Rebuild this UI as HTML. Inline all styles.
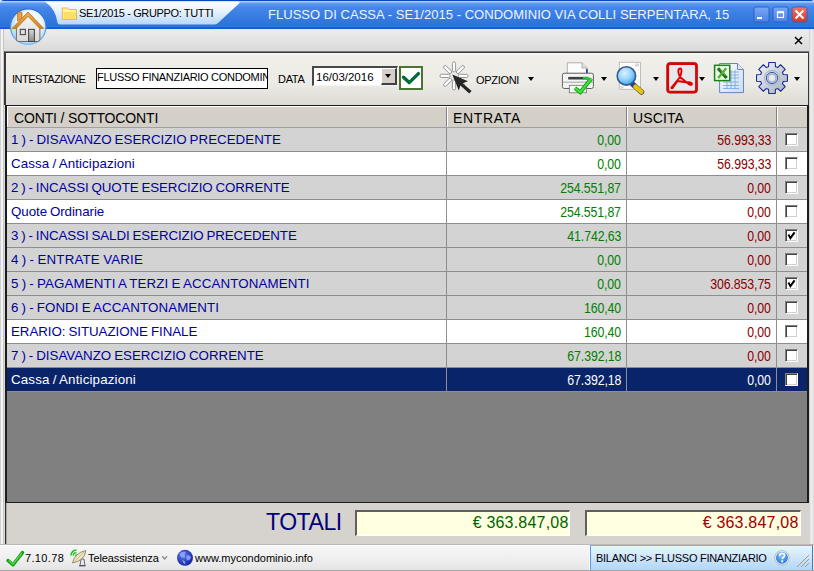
<!DOCTYPE html>
<html><head><meta charset="utf-8">
<style>
*{box-sizing:border-box;margin:0;padding:0}
html,body{width:814px;height:571px;overflow:hidden;background:#eeeeee;font-family:"Liberation Sans",sans-serif;position:relative}
.a{position:absolute}
.t{position:absolute;white-space:pre;line-height:1}
#tb{left:0;top:0;width:814px;height:29px;border-radius:4px 3px 0 0;
 background:linear-gradient(#0b49c2 0px,#0b49c2 1px,#b0d4ff 1px,#8ab8f8 2.5px,#5b9af0 3.5px,#4486e8 8px,#3478de 20px,#2c70da 26px,#3a7ee6 27px,#1a5ccc 27.5px,#1a5ccc 29px)}
.lbl{font-size:13.33px;letter-spacing:-0.03px;word-spacing:-0.7px;color:#0000a0}
.num{font-size:14px;letter-spacing:-0.12px;text-align:right;transform:scaleX(0.88);transform-origin:100% 50%}
.cb{position:absolute;width:13px;height:13px;background:#fff;border:1px solid;border-color:#808080 #fff #fff #808080;box-shadow:inset 1px 1px 0 #404040,inset -1px -1px 0 #d4d0c8}
.hd{font-size:14px;color:#000}
.tri{position:absolute;width:0;height:0;border-style:solid;border-color:#000 transparent transparent transparent;border-width:4px 3.5px 0 3.5px}
</style></head>
<body>
<div id="tb" class="a"></div>
<div class="a" style="left:0;top:29px;width:814px;height:542px;background:linear-gradient(#e8e4e2,#ebebeb 2px,#dadada 22px,#dadada)"></div>
<!-- window frame left/right -->
<div class="a" style="left:0;top:29px;width:1px;height:542px;background:#d0d0d0"></div>
<div class="a" style="left:1px;top:29px;width:2px;height:542px;background:#f4f4f4"></div>
<div class="a" style="left:3px;top:29px;width:1px;height:515px;background:#c4c4c4"></div>
<div class="a" style="left:809px;top:29px;width:5px;height:542px;background:linear-gradient(90deg,#c8c8c8,#f0f0f0 40%,#dcdcdc)"></div>

<!-- title text -->
<div class="t" style="left:268px;top:8px;font-size:13px;letter-spacing:0.03px;color:#eef4ff">FLUSSO DI CASSA - SE1/2015 - CONDOMINIO VIA COLLI SERPENTARA, 15</div>

<!-- toolbar panel -->
<div class="a" style="left:4px;top:51px;width:805px;height:54px;border-style:solid;border-width:2px 1px 0 2px;border-color:#3a3a3a;background:linear-gradient(#f8f8f6,#f0efea 3px,#ecebe6 30px,#dcdad4)"></div><div class="a" style="left:4px;top:51px;width:805px;height:1px;background:#7a7a7a"></div>
<div class="t" style="left:12px;top:74px;font-size:11px;letter-spacing:-0.5px">INTESTAZIONE</div>
<div class="a" style="left:96px;top:68px;width:172px;height:21px;border:1px solid #000;background:#fff;overflow:hidden"><div class="t" style="left:0px;top:3px;font-size:11px;letter-spacing:-0.3px">FLUSSO FINANZIARIO CONDOMINIO</div></div>
<div class="t" style="left:278px;top:74px;font-size:11px;letter-spacing:-0.3px">DATA</div>
<div class="a" style="left:312px;top:66px;width:86px;height:20px;background:#fff;border-style:solid;border-width:2px 1px 1px 2px;border-color:#484848 #f4f4f4 #f4f4f4 #484848"></div>
<div class="t" style="left:316px;top:72px;font-size:11.5px">16/03/2016</div>
<div class="a" style="left:381px;top:68px;width:16px;height:17px;background:#d4d0c8;border-style:solid;border-width:1px 2px 2px 1px;border-color:#fff #404040 #404040 #fff"></div>
<div class="tri" style="left:385px;top:74px;border-width:4px 3.5px 0 3.5px"></div>
<div class="a" style="left:399px;top:66px;width:24px;height:24px;border:2px solid #4a7430;background:#fff"></div>
<div class="t" style="left:476px;top:75px;font-size:11px;letter-spacing:-0.3px">OPZIONI</div>
<div class="tri" style="left:528px;top:77px"></div>
<div class="tri" style="left:601px;top:77px"></div>
<div class="tri" style="left:653px;top:77px"></div>
<div class="tri" style="left:699px;top:77px"></div>
<div class="tri" style="left:794px;top:77px"></div>

<!-- grid -->
<div class="a" style="left:5px;top:104.5px;width:804px;height:398.5px;background:#1c1c1c"></div>
<div class="a" style="left:7px;top:106px;width:800px;height:396px;background:#808080"></div>
<div class="a" style="left:7px;top:106px;width:800px;height:21px;background:#d4d0c8;border-top:1px solid #fff;border-left:1px solid #fff"></div>
<div class="a" style="left:7px;top:127px;width:800px;height:1px;background:#a0a0a0"></div>
<div class="t hd" style="left:14px;top:111px;letter-spacing:-0.14px">CONTI / SOTTOCONTI</div>
<div class="a" style="left:446px;top:107px;width:1px;height:20px;background:#808080"></div><div class="a" style="left:447px;top:107px;width:1px;height:20px;background:#fff"></div>
<div class="t hd" style="left:453px;top:111px;letter-spacing:0.68px">ENTRATA</div>
<div class="a" style="left:626px;top:107px;width:1px;height:20px;background:#808080"></div><div class="a" style="left:627px;top:107px;width:1px;height:20px;background:#fff"></div>
<div class="t hd" style="left:633px;top:111px;letter-spacing:0.12px">USCITA</div>
<div class="a" style="left:776px;top:107px;width:1px;height:20px;background:#808080"></div><div class="a" style="left:777px;top:107px;width:1px;height:20px;background:#fff"></div>
<div class="a" style="left:7px;top:128px;width:800px;height:23px;background:#d3d3d3"></div>
<div class="a" style="left:7px;top:151px;width:800px;height:1px;background:#8e8e8e"></div>
<div class="t lbl" style="left:11px;top:133px;letter-spacing:0.016px">1 ) - DISAVANZO ESERCIZIO PRECEDENTE</div>
<div class="t num" style="right:193px;top:133px;color:#008000">0,00</div>
<div class="t num" style="right:43px;top:133px;color:#8b0000">56.993,33</div>
<div class="cb" style="left:785px;top:133px"></div>
<div class="a" style="left:7px;top:152px;width:800px;height:23px;background:#ffffff"></div>
<div class="a" style="left:7px;top:175px;width:800px;height:1px;background:#8e8e8e"></div>
<div class="t lbl" style="left:11px;top:157px;letter-spacing:0.110px">Cassa / Anticipazioni</div>
<div class="t num" style="right:193px;top:157px;color:#008000">0,00</div>
<div class="t num" style="right:43px;top:157px;color:#8b0000">56.993,33</div>
<div class="cb" style="left:785px;top:157px"></div>
<div class="a" style="left:7px;top:176px;width:800px;height:23px;background:#d3d3d3"></div>
<div class="a" style="left:7px;top:199px;width:800px;height:1px;background:#8e8e8e"></div>
<div class="t lbl" style="left:11px;top:181px;letter-spacing:-0.079px">2 ) - INCASSI QUOTE ESERCIZIO CORRENTE</div>
<div class="t num" style="right:193px;top:181px;color:#008000">254.551,87</div>
<div class="t num" style="right:43px;top:181px;color:#8b0000">0,00</div>
<div class="cb" style="left:785px;top:181px"></div>
<div class="a" style="left:7px;top:200px;width:800px;height:23px;background:#ffffff"></div>
<div class="a" style="left:7px;top:223px;width:800px;height:1px;background:#8e8e8e"></div>
<div class="t lbl" style="left:11px;top:205px;letter-spacing:-0.066px">Quote Ordinarie</div>
<div class="t num" style="right:193px;top:205px;color:#008000">254.551,87</div>
<div class="t num" style="right:43px;top:205px;color:#8b0000">0,00</div>
<div class="cb" style="left:785px;top:205px"></div>
<div class="a" style="left:7px;top:224px;width:800px;height:23px;background:#d3d3d3"></div>
<div class="a" style="left:7px;top:247px;width:800px;height:1px;background:#8e8e8e"></div>
<div class="t lbl" style="left:11px;top:229px;letter-spacing:-0.084px">3 ) - INCASSI SALDI ESERCIZIO PRECEDENTE</div>
<div class="t num" style="right:193px;top:229px;color:#008000">41.742,63</div>
<div class="t num" style="right:43px;top:229px;color:#8b0000">0,00</div>
<div class="cb" style="left:785px;top:229px"></div>
<svg class="a" style="left:785px;top:229px" width="13" height="13"><path d="M3.4 5.6 L5.4 9.2 L9.6 3.4" stroke="#000" stroke-width="2.0" fill="none" stroke-linejoin="miter"/></svg>
<div class="a" style="left:7px;top:248px;width:800px;height:23px;background:#d3d3d3"></div>
<div class="a" style="left:7px;top:271px;width:800px;height:1px;background:#8e8e8e"></div>
<div class="t lbl" style="left:11px;top:253px;letter-spacing:0.187px">4 ) - ENTRATE VARIE</div>
<div class="t num" style="right:193px;top:253px;color:#008000">0,00</div>
<div class="t num" style="right:43px;top:253px;color:#8b0000">0,00</div>
<div class="cb" style="left:785px;top:253px"></div>
<div class="a" style="left:7px;top:272px;width:800px;height:23px;background:#d3d3d3"></div>
<div class="a" style="left:7px;top:295px;width:800px;height:1px;background:#8e8e8e"></div>
<div class="t lbl" style="left:11px;top:277px;letter-spacing:0.124px">5 ) - PAGAMENTI A TERZI E ACCANTONAMENTI</div>
<div class="t num" style="right:193px;top:277px;color:#008000">0,00</div>
<div class="t num" style="right:43px;top:277px;color:#8b0000">306.853,75</div>
<div class="cb" style="left:785px;top:277px"></div>
<svg class="a" style="left:785px;top:277px" width="13" height="13"><path d="M3.4 5.6 L5.4 9.2 L9.6 3.4" stroke="#000" stroke-width="2.0" fill="none" stroke-linejoin="miter"/></svg>
<div class="a" style="left:7px;top:296px;width:800px;height:23px;background:#d3d3d3"></div>
<div class="a" style="left:7px;top:319px;width:800px;height:1px;background:#8e8e8e"></div>
<div class="t lbl" style="left:11px;top:301px;letter-spacing:0.077px">6 ) - FONDI E ACCANTONAMENTI</div>
<div class="t num" style="right:193px;top:301px;color:#008000">160,40</div>
<div class="t num" style="right:43px;top:301px;color:#8b0000">0,00</div>
<div class="cb" style="left:785px;top:301px"></div>
<div class="a" style="left:7px;top:320px;width:800px;height:23px;background:#ffffff"></div>
<div class="a" style="left:7px;top:343px;width:800px;height:1px;background:#8e8e8e"></div>
<div class="t lbl" style="left:11px;top:325px;letter-spacing:-0.047px">ERARIO: SITUAZIONE FINALE</div>
<div class="t num" style="right:193px;top:325px;color:#008000">160,40</div>
<div class="t num" style="right:43px;top:325px;color:#8b0000">0,00</div>
<div class="cb" style="left:785px;top:325px"></div>
<div class="a" style="left:7px;top:344px;width:800px;height:23px;background:#d3d3d3"></div>
<div class="a" style="left:7px;top:367px;width:800px;height:1px;background:#8e8e8e"></div>
<div class="t lbl" style="left:11px;top:349px;letter-spacing:-0.009px">7 ) - DISAVANZO ESERCIZIO CORRENTE</div>
<div class="t num" style="right:193px;top:349px;color:#008000">67.392,18</div>
<div class="t num" style="right:43px;top:349px;color:#8b0000">0,00</div>
<div class="cb" style="left:785px;top:349px"></div>
<div class="a" style="left:7px;top:368px;width:800px;height:23px;background:#0a246a"></div>
<div class="a" style="left:7px;top:391px;width:800px;height:1px;background:#8e8e8e"></div>
<div class="t lbl" style="left:11px;top:373px;letter-spacing:0.160px;color:#fff">Cassa / Anticipazioni</div>
<div class="t num" style="right:193px;top:373px;color:#fff">67.392,18</div>
<div class="t num" style="right:43px;top:373px;color:#fff">0,00</div>
<div class="cb" style="left:785px;top:373px"></div>
<div class="a" style="left:446px;top:128px;width:1px;height:264px;background:#8e8e8e"></div>
<div class="a" style="left:626px;top:128px;width:1px;height:264px;background:#8e8e8e"></div>
<div class="a" style="left:776px;top:128px;width:1px;height:264px;background:#8e8e8e"></div>

<!-- totals -->
<div class="a" style="left:5px;top:503px;width:1px;height:41px;background:#303030"></div><div class="a" style="left:6px;top:503px;width:1px;height:41px;background:#a8a6a2"></div>
<div class="a" style="left:7px;top:503px;width:802px;height:41px;background:#d6d3ce"></div>
<div class="t" style="left:266px;top:511px;font-size:23px;letter-spacing:-0.45px;color:#00007f">TOTALI</div>
<div class="a" style="left:355px;top:510px;width:215px;height:26px;background:#ffffe1;border-style:solid;border-width:2px 1px 1px 2px;border-color:#606060 #fff #fff #606060"></div>
<div class="t" style="right:245.5px;top:515px;font-size:16px;color:#006400;letter-spacing:0.2px">€ 363.847,08</div>
<div class="a" style="left:585px;top:510px;width:216px;height:26px;background:#ffffe1;border-style:solid;border-width:2px 1px 1px 2px;border-color:#606060 #fff #fff #606060"></div>
<div class="t" style="right:15.5px;top:515px;font-size:16px;color:#a00000;letter-spacing:0.2px">€ 363.847,08</div>

<!-- status bar -->
<div class="a" style="left:0;top:544px;width:814px;height:27px;background:linear-gradient(#b8b8b8 0,#b8b8b8 1px,#ffffff 1px,#ffffff 2px,#f6f6f6 2px,#eeeeee 60%,#e4e4e4 26px,#a8a8a8 26px)"></div>
<div class="t" style="left:25px;top:553px;font-size:11px;letter-spacing:0.35px">7.10.78</div>
<div class="t" style="left:88px;top:553px;font-size:11px;letter-spacing:-0.1px">Teleassistenza</div>
<div class="t" style="left:195px;top:553px;font-size:11px;letter-spacing:0px">www.mycondominio.info</div>
<div class="a" style="left:589px;top:545px;width:1px;height:25px;background:#fafafa"></div><div class="a" style="left:590px;top:545px;width:223px;height:25px;background:linear-gradient(#eaf4fd,#d0e6fa 45%,#b2d6f6);border-style:solid;border-width:1px 1px 0 1px;border-color:#7ab0f0 #3a78d8 #7ab0f0 #5a9ae8"></div>
<div class="t" style="left:596px;top:553px;font-size:11px;letter-spacing:-0.27px">BILANCI &gt;&gt; FLUSSO FINANZIARIO</div>
<svg class="a" style="left:0;top:0" width="814" height="571" viewBox="0 0 814 571">
<defs>
 <linearGradient id="tabg" x1="0" y1="0" x2="0" y2="1">
  <stop offset="0" stop-color="#fbfdff"/><stop offset="0.45" stop-color="#e6f2fd"/><stop offset="1" stop-color="#b6d6f8"/>
 </linearGradient>
 <radialGradient id="houseg" cx="0.55" cy="0.4" r="0.6">
  <stop offset="0" stop-color="#ffffff"/><stop offset="0.55" stop-color="#eef6fe"/><stop offset="1" stop-color="#a8d4f8"/>
 </radialGradient>
 <linearGradient id="hstroke" x1="0" y1="0" x2="0" y2="1">
  <stop offset="0" stop-color="#2a68d0"/><stop offset="0.5" stop-color="#4a90e0"/><stop offset="1" stop-color="#80bcf0"/>
 </linearGradient>
 <linearGradient id="doorg" x1="0" y1="0" x2="0" y2="1">
  <stop offset="0" stop-color="#d8d8d8"/><stop offset="1" stop-color="#8c8c8c"/>
 </linearGradient>
 <linearGradient id="roofg" x1="0" y1="0" x2="0" y2="1">
  <stop offset="0" stop-color="#f0b050"/><stop offset="1" stop-color="#d08820"/>
 </linearGradient>
 <linearGradient id="bodyg" x1="0" y1="0" x2="0" y2="1">
  <stop offset="0" stop-color="#f8f8f8"/><stop offset="1" stop-color="#d8d8d8"/>
 </linearGradient>
 <linearGradient id="redg" x1="0" y1="0" x2="0" y2="1">
  <stop offset="0" stop-color="#f07868"/><stop offset="0.5" stop-color="#e85040"/><stop offset="1" stop-color="#d83828"/>
 </linearGradient>
 <linearGradient id="bluebtn" x1="0" y1="0" x2="0" y2="1">
  <stop offset="0" stop-color="#78a8f4"/><stop offset="1" stop-color="#4a82e4"/>
 </linearGradient>
 <radialGradient id="lensg" cx="0.4" cy="0.35" r="0.65">
  <stop offset="0" stop-color="#e0f2ff"/><stop offset="0.6" stop-color="#90d0fc"/><stop offset="1" stop-color="#3aa8f0"/>
 </radialGradient>
 <linearGradient id="gearg" x1="0" y1="0" x2="1" y2="1">
  <stop offset="0" stop-color="#f4f6fa"/><stop offset="0.45" stop-color="#d0d6e0"/><stop offset="1" stop-color="#a4aebc"/>
 </linearGradient>
 <linearGradient id="xlsdoc" x1="0" y1="0" x2="1" y2="1">
  <stop offset="0" stop-color="#ffffff"/><stop offset="1" stop-color="#c8dcf4"/>
 </linearGradient>
 <radialGradient id="globeg" cx="0.4" cy="0.35" r="0.7">
  <stop offset="0" stop-color="#6080f0"/><stop offset="1" stop-color="#0c1c98"/>
 </radialGradient>
 <radialGradient id="helpg" cx="0.45" cy="0.35" r="0.7">
  <stop offset="0" stop-color="#80c0ff"/><stop offset="1" stop-color="#1870e0"/>
 </radialGradient>
</defs>

<!-- title tab -->
<path d="M44.7 1.6 L238 1.6 Q241 1.6 239 3.5 L218 23 Q216.5 24.6 214 24.6 L60 24.6 Q57.6 24.6 57.4 22.5 A29.5 29.5 0 0 0 44.7 1.6 Z" fill="url(#tabg)"/>
<!-- house circle -->
<circle cx="28.2" cy="26.7" r="17.7" fill="url(#houseg)" stroke="url(#hstroke)" stroke-width="1.2"/>
<path d="M16.4 25 L28 15 L39.9 25 L39.9 39.3 Q39.9 41.5 37.7 41.5 L18.6 41.5 Q16.4 41.5 16.4 39.3 Z" fill="url(#bodyg)" stroke="#6a6a6a" stroke-width="1"/>
<rect x="20.3" y="29.4" width="5.1" height="5.2" fill="#dedede" stroke="#4a4a4a" stroke-width="1.1"/>
<rect x="28.6" y="29.4" width="5.8" height="12.1" fill="url(#doorg)" stroke="#4a4a4a" stroke-width="1.1"/>
<path d="M17.6 21 L17.6 13 Q17.6 12.2 18.4 12.2 L21.2 12.2 Q22 12.2 22 13 L22 17.5 Z" fill="#eaa240" stroke="#b87018" stroke-width="0.8"/>
<path d="M12.3 28.4 L28 12 L43.6 28.4 L39.8 28.4 L28 16.3 L16.2 28.4 Z" fill="url(#roofg)" stroke="#b87018" stroke-width="0.9" stroke-linejoin="round"/>
<!-- folder -->
<path d="M62.3 8 L67.5 8 L69 9.5 L76.5 9.5 L76.5 19.4 L62.3 19.4 Z" fill="#fff2a0" stroke="#e0b040" stroke-width="0.9"/>
<rect x="63.6" y="12" width="12.5" height="7" fill="#f8e060"/>

<!-- title buttons -->
<rect x="754" y="7" width="15" height="15" rx="2" fill="url(#bluebtn)" stroke="#2a5cc4" stroke-width="0.9"/>
<rect x="757" y="17" width="5" height="2" fill="#fff"/>
<rect x="773" y="7" width="15" height="15" rx="2" fill="url(#bluebtn)" stroke="#2a5cc4" stroke-width="0.9"/>
<rect x="777.5" y="12" width="6" height="5.5" fill="none" stroke="#fff" stroke-width="1.2"/>
<rect x="777" y="11.4" width="7" height="1.8" fill="#fff"/>
<rect x="792" y="7" width="15" height="15" rx="2" fill="url(#redg)" stroke="#3a5cb8" stroke-width="0.9"/>
<path d="M795.5 10.5 L803.5 18.5 M803.5 10.5 L795.5 18.5" stroke="#fff" stroke-width="2"/>

<!-- close x under title -->
<path d="M795 37 L802 44 M802 37 L795 44" stroke="#000" stroke-width="1.5"/>

<!-- toolbar check button -->
<path d="M403.5 77.2 L409.2 82.6 L418.4 73.6" stroke="#006a3a" stroke-width="3.4" fill="none" stroke-linecap="round" stroke-linejoin="round"/>

<!-- opzioni star -->
<g stroke="#8a8a8a" stroke-width="0.9" fill="#fff">
<rect x="458" y="74.3" width="10" height="3.2" rx="1.5" transform="rotate(0 454 75.9)"/>
<rect x="458" y="74.3" width="10" height="3.2" rx="1.5" transform="rotate(45 454 75.9)"/>
<rect x="458" y="74.3" width="10" height="3.2" rx="1.5" transform="rotate(90 454 75.9)"/>
<rect x="458" y="74.3" width="10" height="3.2" rx="1.5" transform="rotate(135 454 75.9)"/>
<rect x="458" y="74.3" width="10" height="3.2" rx="1.5" transform="rotate(180 454 75.9)"/>
<rect x="458" y="74.3" width="10" height="3.2" rx="1.5" transform="rotate(225 454 75.9)"/>
<rect x="458" y="74.3" width="10" height="3.2" rx="1.5" transform="rotate(270 454 75.9)"/>
<rect x="458" y="74.3" width="10" height="3.2" rx="1.5" transform="rotate(315 454 75.9)"/>
</g>
<path d="M452.3 74.4 L468 81.3 L462.6 83.3 L471.6 91.1 L469.2 93.4 L460.4 85.4 L458.8 90.6 Z" fill="#262626"/>

<!-- printer -->
<path d="M567.3 62.8 L582 62.8 L587.3 68 L587.3 73.5 L567.3 73.5 Z" fill="#fcfcfc" stroke="#a0a0a0" stroke-width="0.8"/>
<path d="M582 62.8 L582 68 L587.3 68" fill="#e0e0e0" stroke="#a0a0a0" stroke-width="0.8"/>
<rect x="586" y="69" width="1.6" height="4.5" fill="#2040a0"/>
<rect x="562.4" y="73.2" width="31" height="15.3" rx="2" fill="#f4f4f4" stroke="#606060" stroke-width="1"/>
<rect x="568.2" y="76.9" width="20" height="2.6" fill="#404040"/>
<rect x="583" y="76.9" width="5.5" height="2.6" fill="#20c030"/>
<path d="M562.6 82.2 L593.2 82.2" stroke="#909090" stroke-width="0.8"/>
<rect x="569.3" y="85.3" width="17.3" height="7.5" fill="#f8f8f8" stroke="#707070" stroke-width="0.8"/>
<path d="M575 88.2 L580.3 92.3 L591.4 78.6" stroke="#10a010" stroke-width="4" fill="none" stroke-linejoin="miter"/>
<path d="M575 88.2 L580.3 92.3 L591.4 78.6" stroke="#40e040" stroke-width="2.2" fill="none"/>

<!-- magnifier -->
<rect x="619.3" y="62.3" width="21.2" height="27" fill="#fdfdfd" stroke="#b8b8b8" stroke-width="0.9"/>
<rect x="635" y="63.5" width="4" height="3" fill="#d8d8d8"/>
<rect x="620.5" y="86" width="3" height="2.5" fill="#d8d8d8"/>
<path d="M633 84.5 L641.5 92" stroke="#283c90" stroke-width="5.5" stroke-linecap="round"/>
<path d="M635.5 86.8 L641.3 91.8" stroke="#e8c400" stroke-width="4.6" stroke-linecap="round"/>
<circle cx="626.4" cy="75.9" r="9.2" fill="url(#lensg)" stroke="#3a5a8a" stroke-width="1.6"/>

<!-- pdf -->
<rect x="667.8" y="63.6" width="28.6" height="28.4" rx="2.5" fill="#e6e8ec" stroke="#e00000" stroke-width="2.6"/>
<rect x="666.6" y="62.4" width="31" height="30.8" rx="3.2" fill="none" stroke="#9a2020" stroke-width="0.6"/>
<path d="M680 68.5 C677.5 69 678 73 680 77 L671.5 87.5 C671 88.5 672.5 88.5 673 87.5 L677.5 81 L687 82.5 C689.5 85 691.5 85.5 692 84 C692 82.5 689 82 686.5 82.3 L680 77 C682 72 682 68 680 68.5 Z M677.5 81 L686.5 82.3" fill="none" stroke="#e00000" stroke-width="1.9" stroke-linejoin="round"/>

<!-- excel -->
<path d="M719.6 63.5 L737.5 63.5 L743.5 69.5 L743.5 92.6 L719.6 92.6 Z" fill="url(#xlsdoc)" stroke="#5a7ab8" stroke-width="0.9"/>
<path d="M737.5 63.5 L737.5 69.5 L743.5 69.5" fill="#dce8f8" stroke="#5a7ab8" stroke-width="0.9"/>
<g stroke="#80a8e0" stroke-width="0.9" fill="none">
 <path d="M731 72 L739 72 M731 75 L739 75 M731 78 L739 78 M723 82 L739 82 M723 85.5 L739 85.5 M723 88.5 L739 88.5 M731 70 L731 89 M735 70 L735 89 M727 82 L727 89"/>
</g>
<rect x="714.6" y="65.3" width="15.2" height="15.3" fill="#eef8e8" stroke="#1a801a" stroke-width="1.5"/>
<path d="M718 68.3 L726.6 78" stroke="#127012" stroke-width="3.2"/>
<path d="M726.2 68.3 L718.2 78" stroke="#50b030" stroke-width="2.4"/>
<path d="M719.5 68.8 L725.5 75.8" stroke="#60c040" stroke-width="0.9"/>

<!-- gear -->
<g transform="translate(772 78)">
 <path d="M-4.52 -10.90 L-3.45 -11.28 L-3.29 -15.45 L3.29 -15.45 L3.45 -11.28 L4.52 -10.90 L5.54 -10.42 L8.61 -13.25 L13.25 -8.61 L10.42 -5.54 L10.90 -4.52 L11.28 -3.45 L15.45 -3.29 L15.45 3.29 L11.28 3.45 L10.90 4.52 L10.42 5.54 L13.25 8.61 L8.61 13.25 L5.54 10.42 L4.52 10.90 L3.45 11.28 L3.29 15.45 L-3.29 15.45 L-3.45 11.28 L-4.52 10.90 L-5.54 10.42 L-8.61 13.25 L-13.25 8.61 L-10.42 5.54 L-10.90 4.52 L-11.28 3.45 L-15.45 3.29 L-15.45 -3.29 L-11.28 -3.45 L-10.90 -4.52 L-10.42 -5.54 L-13.25 -8.61 L-8.61 -13.25 L-5.54 -10.42 Z" fill="url(#gearg)" stroke="#1c2c98" stroke-width="1.1" stroke-linejoin="round"/>
 <circle r="7.5" fill="none" stroke="#b0bccc" stroke-width="1.5"/>
 <circle r="5.6" fill="#c8d2de" stroke="#3858a8" stroke-width="1"/>
 <circle r="3.9" fill="#e8eaec" stroke="#6a88b8" stroke-width="0.6"/>
</g>

<!-- status icons -->
<path d="M162.2 556.3 L164.6 559 L167 556.3" stroke="#8a8a8a" stroke-width="1.3" fill="none"/>
<path d="M8 560.5 L13 564.8 L22.5 552.6" stroke="#189818" stroke-width="3.4" fill="none" stroke-linejoin="round" stroke-linecap="round"/>
<path d="M8.5 560.5 L13 564 L22 553" stroke="#50d850" stroke-width="1.5" fill="none"/>
<path d="M71 555.5 A5.5 5.5 0 0 1 76.5 550" stroke="#18c018" stroke-width="1.5" fill="none"/>
<path d="M73.3 555.8 A3.2 3.2 0 0 1 76.5 552.6" stroke="#18c018" stroke-width="1.4" fill="none"/>
<circle cx="76.3" cy="555.3" r="1.1" fill="#18c018"/>
<path d="M80 565.5 L85 565.5 L84 559 L81 559 Z" fill="#e8e8e8" stroke="#606060" stroke-width="0.9"/>
<path d="M79 565.8 L85.5 565.8" stroke="#4a4a70" stroke-width="1.2"/>
<path d="M72.5 563 Q74.5 553 85.8 550.5 Q85 560.5 72.5 563 Z" fill="#ebe3c2" stroke="#8c8060" stroke-width="0.9"/>
<path d="M74.5 561.5 L84 552" stroke="#b8a880" stroke-width="0.6"/>
<circle cx="185" cy="557.8" r="8" fill="url(#globeg)"/>
<path d="M179.5 553.5 Q182 551 185.5 552 Q184 555 185 557.5 Q182 558.5 180 556 Z M186.5 555.5 Q190 554.5 191 557.5 Q189.5 561 187 560 Q186 558 186.5 555.5 Z M182.5 560 Q185.5 560.5 185.5 564.5 Q182.5 563.5 182.5 560 Z" fill="#90a8ff" opacity="0.85"/>
<circle cx="781.9" cy="557.8" r="7.2" fill="#f4f8fc" stroke="#b0a8a0" stroke-width="0.8"/>
<circle cx="781.9" cy="557.8" r="6" fill="url(#helpg)"/>
<path d="M779.5 556 Q779.5 553.3 782 553.3 Q784.6 553.3 784.6 555.6 Q784.6 557 782.6 557.9 L782.3 559.3" stroke="#fff" stroke-width="1.8" fill="none"/>
<rect x="781.2" y="560.3" width="2" height="2" fill="#fff"/>
<path d="M797 567 L809 555 M801 567 L809 559 M805 567 L809 563" stroke="#a09890" stroke-width="1"/>
</svg>

<div class="t" style="left:79px;top:8px;font-size:11px;letter-spacing:-0.36px">SE1/2015 - GRUPPO: TUTTI</div>
</body></html>
